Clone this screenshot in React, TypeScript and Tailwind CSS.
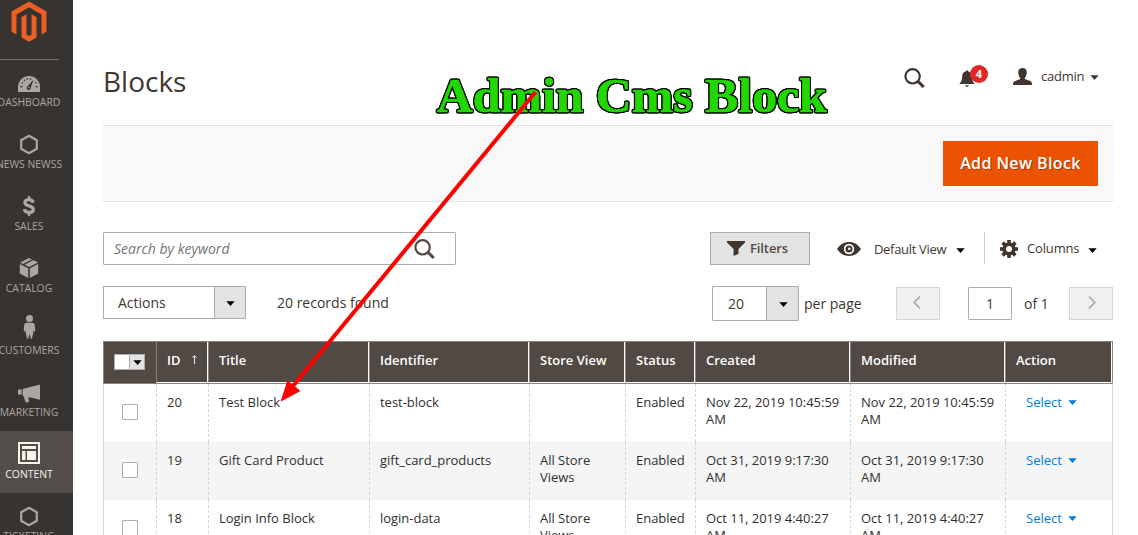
import React from "react";

type IconProps = { className?: string };

const Caret = ({ className = "" }: IconProps) => (
  <svg className={className} width="9" height="5" viewBox="0 0 9 5" fill="currentColor">
    <path d="M0.3 0.2h8.4L4.5 5z" />
  </svg>
);

const Hexagon = () => (
  <svg width="18" height="20" viewBox="0 0 18 20" fill="none" stroke="currentColor" strokeWidth="2.200">
    <path d="M9 1.300 16.800 5.700v8.600L9 18.700 1.200 14.300V5.700z" />
  </svg>
);

const Gauge = () => (
  <svg width="22" height="16" viewBox="0 0 22 16">
    <path d="M0 16V11a11 11 0 0 1 22 0v5z" fill="currentColor" />
    <g fill="#373330">
      <rect x="2.200" y="10" width="2.200" height="1.300" />
      <rect x="17.600" y="10" width="2.200" height="1.300" />
      <circle cx="4.300" cy="6.800" r="0.800" />
      <circle cx="6.600" cy="4.300" r="0.800" />
      <circle cx="9.400" cy="3.100" r="0.800" />
      <circle cx="12.600" cy="3.100" r="0.800" />
      <circle cx="18" cy="6.800" r="0.800" />
      <path d="M15.600 3.600 12.700 11.800a2 2 0 1 1-3-1.600z" />
    </g>
    <circle cx="10.900" cy="11.500" r="0.700" fill="currentColor" />
  </svg>
);

const Dollar = () => (
  <svg width="12" height="20" viewBox="0 0 12 20" fill="none" stroke="currentColor">
    <path d="M6 0v3.500M6 16.500V20" strokeWidth="2.400" />
    <path d="M10.200 6.800C9.800 4.700 8.400 3.600 6 3.600 3.500 3.600 1.900 4.700 1.900 6.500c0 4.300 8.400 2.400 8.400 6.900 0 2-1.800 3.100-4.300 3.100-2.700 0-4.300-1.200-4.600-3.500" strokeWidth="3.300" />
  </svg>
);

const Box = () => (
  <svg width="20" height="20" viewBox="0 0 20 20" fill="currentColor">
    <path d="M10 0l3 1.400L3.900 5.900 1 4.600zM14.500 2.100 19 4.600 10 9 5.600 6.800z" />
    <path d="M.8 6.100 9.200 10.300V20L.8 15.600zM19.200 6.100v9.500L10.800 20v-9.700z" />
  </svg>
);

const Person = () => (
  <svg width="12" height="24" viewBox="0 0 12 24" fill="currentColor">
    <circle cx="6" cy="3.500" r="3.500" />
    <path d="M3 7.800h6c1.300 0 2 .8 2.200 2L12 16l-1.600.8-.6-2V18l-1.400 5.800H7.300L6 19l-1.300 4.800H3.600L2.200 18v-3.200l-.6 2L0 16l.8-6.200c.2-1.200.9-2 2.200-2z" />
  </svg>
);

const Megaphone = () => (
  <svg width="22" height="19" viewBox="0 0 22 19" fill="currentColor">
    <path d="M0 5h3.600v5H0zM4.600 4.500 22 0v15.200L10.400 12.400 11 17.600l-3.400.4-1.800-6-1.200-.9z" />
  </svg>
);

const ContentIcon = () => (
  <svg width="22" height="22" viewBox="0 0 22 22">
    <path fill="currentColor" fillRule="evenodd" d="M0 0h22v22H0zM2 2v18h18V2z" />
    <path fill="currentColor" d="M4 4h14v3H4zM4 9h3.500v9H4zM9 9h9v9H9z" />
  </svg>
);

const Search = ({ className = "" }: IconProps) => (
  <svg className={className} width="21" height="20" viewBox="0 0 21 20" fill="none" stroke="currentColor">
    <circle cx="8.600" cy="8.300" r="7.200" strokeWidth="2.200" />
    <path d="M13.800 13.200 19.800 19" strokeWidth="3" />
  </svg>
);

const Bell = () => (
  <svg width="16" height="17" viewBox="0 0 16 17" fill="#41362f">
    <path d="M7 1.200a1 1 0 0 1 2 0c2.500.5 3.700 2.500 3.800 5 .1 3.500.7 5 2.900 7.800H.3c2.200-2.800 2.800-4.300 2.900-7.800.1-2.500 1.300-4.500 3.800-5zM6.200 15.200h3.600c-.3 1-1 1.600-1.800 1.600s-1.500-.6-1.800-1.600z" />
  </svg>
);

const User = () => (
  <svg width="19" height="17" viewBox="0 0 19 17" fill="#41362f">
    <path d="M9.500 0c2.600 0 4.300 1.600 4.300 4.200 0 2-.7 4.300-2 5.700v1.200c1 .8 5.600 1.500 6.700 3 .4.700.5 1.700.5 2.900H0c0-1.200.1-2.200.5-2.900 1.100-1.500 5.700-2.200 6.700-3V9.900c-1.300-1.400-2-3.700-2-5.700C5.200 1.600 6.900 0 9.500 0z" />
  </svg>
);

const Funnel = () => (
  <svg width="18" height="15" viewBox="0 0 18 15" fill="#41362f">
    <path d="M0 0h18v1.600L11.500 8v4.700L6.600 15V8L0 1.600z" />
  </svg>
);

const Eye = () => (
  <svg width="24" height="14" viewBox="0 0 24 14">
    <path fill="#41362f" fillRule="evenodd" d="M0 7C3 2.500 7 0 12 0s9 2.500 12 7c-3 4.500-7 7-12 7S3 11.500 0 7zM12 1.800a5.200 5.200 0 1 0 0 10.400 5.200 5.200 0 0 0 0-10.400z" />
    <circle cx="12" cy="7" r="3.500" fill="#41362f" />
    <circle cx="12.300" cy="6.800" r="1.300" fill="#fff" />
  </svg>
);

const Gear = () => (
  <svg width="18" height="18" viewBox="-9 -9 18 18">
    <g fill="#41362f">
      <rect x="-1.800" y="-9" width="3.600" height="18" />
      <rect x="-1.800" y="-9" width="3.600" height="18" transform="rotate(45)" />
      <rect x="-1.800" y="-9" width="3.600" height="18" transform="rotate(90)" />
      <rect x="-1.800" y="-9" width="3.600" height="18" transform="rotate(135)" />
      <circle r="6.600" />
    </g>
    <circle r="3" fill="#fff" />
  </svg>
);

const Chevron = ({ className = "" }: IconProps) => (
  <svg className={className} width="8" height="13" viewBox="0 0 8 13" fill="none" stroke="#aaa6a0" strokeWidth="1.600">
    <path d="M7 .6 1.200 6.500 7 12.400" />
  </svg>
);

const menu = [
  { label: "DASHBOARD", icon: <Gauge />, shift: "translate-y-[2px]" },
  { label: "NEWS NEWSS", icon: <Hexagon />, shift: "translate-y-[0.5px]" },
  { label: "SALES", icon: <Dollar />, shift: "" },
  { label: "CATALOG", icon: <Box />, shift: "" },
  { label: "CUSTOMERS", icon: <Person />, shift: "-translate-y-[3px] translate-x-[0.5px]" },
  { label: "MARKETING", icon: <Megaphone />, shift: "translate-y-[1.5px]" },
  { label: "CONTENT", icon: <ContentIcon />, shift: "-translate-y-px", active: true },
  { label: "TICKETING", icon: <Hexagon />, shift: "translate-y-[0.5px]" },
];

const columns = ["ID", "Title", "Identifier", "Store View", "Status", "Created", "Modified", "Action"];

const rows = [
  ["20", "Test Block", "test-block", "", "Enabled", "Nov 22, 2019 10:45:59 AM", "Nov 22, 2019 10:45:59 AM"],
  ["19", "Gift Card Product", "gift_card_products", "All Store Views", "Enabled", "Oct 31, 2019 9:17:30 AM", "Oct 31, 2019 9:17:30 AM"],
  ["18", "Login Info Block", "login-data", "All Store Views", "Enabled", "Oct 11, 2019 4:40:27 AM", "Oct 11, 2019 4:40:27 AM"],
];

const gridCols = "grid grid-cols-[53px_52px_161px_160px_96px_70px_155px_155px_108px]";

function Sidebar() {
  return (
    <aside className="h-full w-[73px] shrink-0 overflow-hidden bg-[#373330]">
      <div className="-ml-[15px] w-[88px]">
        <div className="flex h-[59px] justify-center pt-px">
          <svg width="36" height="41" viewBox="0 0 36 41" fill="#eb5f24">
            <path d="M18 .5 35.500 10.500v20.200l-5 2.900V13.400L18 6.200 5.500 13.400v20.200l-5-2.900V10.500z" />
            <path d="M10.500 16.200l5-2.900v20.200l2.500 1.400 2.500-1.400V13.300l5 2.900v20.300L18 40.700l-7.500-4.200z" />
          </svg>
        </div>
        <nav>
          <div className="mr-[14px] -mb-px h-px bg-[#736e69]" />
          {menu.map((m) => (
            <div
              key={m.label}
              className={`flex h-[62px] flex-col items-center pt-[11px] text-[10.4px] ${m.active ? "bg-[#524d49] text-[#f7f3eb]" : "text-[#aaa6a0]"}`}
            >
              <span className={`flex h-6 items-center justify-center ${m.shift}`}>{m.icon}</span>
              <span className="mt-px leading-[14px] whitespace-nowrap">{m.label}</span>
            </div>
          ))}
        </nav>
      </div>
    </aside>
  );
}

function Header() {
  return (
    <header className="flex h-[125px] items-start">
      <h1 className="mt-[62px] w-[790px] text-[28px] leading-[38px] text-[#41362f]">Blocks</h1>
      <div className="mt-[60px] flex h-8 flex-1 items-center">
        <Search className="ml-[11px] mt-[4px] shrink-0 text-[#41362f]" />
        <span className="relative ml-[34px] mt-[5px] shrink-0">
          <Bell />
          <span className="absolute -top-[5px] left-[11px] flex h-[18px] w-[18px] items-center justify-center rounded-full bg-[#e22626] text-[11px] font-bold text-white">4</span>
        </span>
        <span className="ml-[38px] shrink-0"><User /></span>
        <span className="ml-[9px] mt-[2px] w-[43px] text-[13px] tracking-[-0.25px] text-[#41362f]">cadmin</span>
        <Caret className="ml-[6px] mt-0.5 shrink-0 text-[#41362f]" />
      </div>
    </header>
  );
}

function Toolbar() {
  return (
    <>
      <div className="mt-[30px] flex h-[33px] text-[#41362f]">
        <div className="flex h-[33px] w-[353px] items-center rounded-[1px] border border-[#adadad] pl-[10px] pr-[20px]">
          <span className="flex-1 text-[14px] text-[#757575] italic">Search by keyword</span>
          <Search className="text-[#514943]" />
        </div>
        <button className="ml-[254px] flex h-[33px] w-[100px] items-center border border-[#adadad] bg-[#e3e3e3] pl-[16px] text-[13px] font-semibold text-[#514943]">
          <Funnel />
          <span className="ml-[5px] tracking-[-0.1px]">Filters</span>
        </button>
        <div className="ml-[27px] flex items-center text-[13px]">
          <Eye />
          <span className="ml-[13px] mt-0.5 w-[73px] whitespace-nowrap tracking-[-0.32px]">Default View</span>
          <Caret className="ml-[9px] mt-1 text-black" />
        </div>
        <div className="ml-[19px] flex h-8 items-center border-l border-[#ccc] pl-[15px] text-[13px]">
          <span className="mt-[2px]"><Gear /></span>
          <span className="ml-[9px] mt-px w-[53px] tracking-[-0.15px]">Columns</span>
          <Caret className="ml-[8px] mt-[5px] text-black" />
        </div>
      </div>
      <div className="mt-[21px] flex h-[55px] text-[14px] text-[#41362f]">
        <div className="flex h-[33px] w-[143px] border border-[#adadad]">
          <span className="flex flex-1 items-center pl-[14px]">Actions</span>
          <span className="flex w-[31px] items-center justify-center border-l border-[#adadad] bg-[#e3e3e3] pt-px text-black"><Caret /></span>
        </div>
        <span className="ml-[31px] mt-[7px] w-[435px] leading-[19px]">20 records found</span>
        <div className="flex h-[35px] w-[87px] rounded-[1px] border border-[#adadad]">
          <span className="flex flex-1 items-center pl-[15px]">20</span>
          <span className="flex w-[32px] items-center justify-center border-l border-[#adadad] bg-[#e3e3e3] pl-px pt-px text-black"><Caret /></span>
        </div>
        <span className="ml-[5px] mt-[8px] w-[92px] leading-[19px]">per page</span>
        <div className="mt-px flex h-[33px]">
          <span className="flex w-[44px] items-center justify-center border border-[#d6d6d6] bg-[#f0f0f0] pr-[3px] pb-[2px]"><Chevron /></span>
          <span className="ml-[28px] flex w-[44px] items-center justify-center rounded-[1px] border border-[#adadad]">1</span>
          <span className="ml-[12px] mt-[7px] w-[33px] leading-[19px]">of 1</span>
          <span className="ml-[12px] flex w-[44px] items-center justify-center border border-[#d6d6d6] bg-[#f0f0f0] pl-[2px] pb-[2px]"><Chevron className="rotate-180" /></span>
        </div>
      </div>
    </>
  );
}

function BlocksTable() {
  return (
    <div className="w-[1010px] text-[13px] leading-[17px] text-[#303030]">
      <div className={`${gridCols} h-[43px] border-y border-[#8a837f] bg-[#514943] font-semibold text-white`}>
        <div className="flex items-center border-l border-[#8a837f] pb-px pl-[10px]">
          <span className="flex h-4 w-[31px] border border-[#adadad] bg-white">
            <span className="ml-auto flex w-[15px] items-center justify-center border-l border-[#adadad] bg-[#e3e3e3] text-black"><Caret className="shrink-0" /></span>
          </span>
        </div>
        {columns.map((c) => (
          <div key={c} className="flex items-start border-b border-l border-b-white border-l-[#8a837f] last:border-r last:border-r-[#8a837f]">
            <div className="flex h-full flex-1 border-r border-white pt-[10px] pl-[10px]">
              {c}
              {c === "ID" && (
                <svg className="ml-[11px] mt-[3px]" width="5" height="9" viewBox="0 0 5 9" fill="none" stroke="#fff" strokeWidth="0.900">
                  <path d="M2.500 9V.8M.4 2.800 2.500.7l2.100 2.100" />
                </svg>
              )}
            </div>
          </div>
        ))}
      </div>
      {rows.map((r, i) => (
        <div key={r[0]} className={`${gridCols} h-[58px] w-[1010px] border-x border-[#d6d6d6] ${i % 2 ? "bg-[#f5f5f5]" : "bg-white"}`}>
          <div className="pt-[20px] pl-[18px]">
            <span className="block h-4 w-4 rounded-[1px] border border-[#adadad] bg-white" />
          </div>
          {r.map((cell, j) => (
            <div key={j} className="-ml-px mr-px border-l border-dashed border-[#d6d6d6] pt-[10px] pr-[8px] pl-[10px] tracking-[-0.02px]">{cell}</div>
          ))}
          <div className="-ml-px flex items-start border-l border-dashed border-[#d6d6d6] pt-[10px] pl-[20px] text-[#007bdb]">
            Select
            <Caret className="ml-[6.5px] mt-[6px]" />
          </div>
        </div>
      ))}
    </div>
  );
}

export default function App() {
  return (
    <div className="relative flex h-[535px] w-[1138px] overflow-hidden bg-white font-['Open_Sans',sans-serif]">
      <Sidebar />
      <main className="ml-[30px] w-[1010px]">
        <Header />
        <div className="flex h-[77px] items-start justify-end border-y border-[#e3e3e3] bg-[#f8f8f8] pt-[15px] pr-[15px]">
          <button className="h-[45px] w-[155px] bg-[#eb5202] pb-[2px] text-[16px] font-semibold tracking-[0.4px] text-white [text-shadow:1px_1px_0_rgba(0,0,0,0.3)]">
            Add New Block
          </button>
        </div>
        <Toolbar />
        <BlocksTable />
      </main>
      <svg className="pointer-events-none absolute inset-0" width="1138" height="535" viewBox="0 0 1138 535">
        <text
          x="436.800"
          y="112"
          textLength="390"
          lengthAdjust="spacingAndGlyphs"
          strokeWidth="0.700"
          className="fill-[#22d800] stroke-[#22d800] font-['Liberation_Serif',serif] text-[49px] font-bold [filter:drop-shadow(1px_0_0_#000)_drop-shadow(-1px_0_0_#000)_drop-shadow(0_1px_0_#000)_drop-shadow(0_-1px_0_#000)]"
        >
          Admin Cms Block
        </text>
        <path d="M535.500 92 293 386" stroke="#f00" strokeWidth="4" />
        <path d="M280.500 401.700 287.500 380.300 300.500 391z" fill="#f00" />
      </svg>
    </div>
  );
}
